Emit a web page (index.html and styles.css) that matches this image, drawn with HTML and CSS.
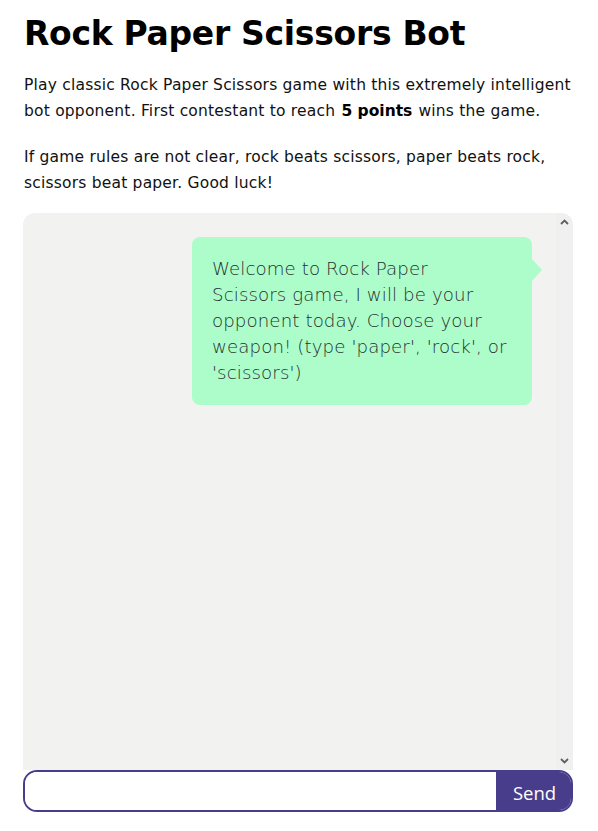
FILE: index.html
```html
<!DOCTYPE html>
<html>
<head>
<meta charset="utf-8">
<link rel="stylesheet" href="styles.css">
</head>
<body>
<main class="page">
  <h1 class="title">Rock Paper Scissors Bot</h1>
  <p class="intro">Play classic Rock Paper Scissors game with this extremely intelligent bot opponent. First contestant to reach <b>5 points</b> wins the game.</p>
  <p class="intro last">If game rules are not clear, rock beats scissors, paper beats rock, scissors beat paper. Good luck!</p>
  <section class="chat">
    <div class="window">
      <div class="messages">
        <div class="bubble bot">Welcome to Rock Paper<br>Scissors game, I will be your opponent today. Choose your weapon! (type 'paper', 'rock', or 'scissors')</div>
      </div>
      <div class="scrollbar">
        <svg class="arrow" width="9" height="6" viewBox="0 0 9 6"><path d="M1 5 L4.5 1.5 L8 5" fill="none" stroke="#5f5f5f" stroke-width="1.8"/></svg>
        <svg class="arrow" width="9" height="6" viewBox="0 0 9 6"><path d="M1 1 L4.5 4.5 L8 1" fill="none" stroke="#5f5f5f" stroke-width="1.8"/></svg>
      </div>
    </div>
    <form class="composer">
      <input class="field" type="text">
      <button class="send" type="button">Send</button>
    </form>
  </section>
</main>
</body>
</html>
```
FILE: styles.css
```css
html, body { margin: 0; padding: 0; background: #fff; }
.page {
  padding: 14px 25px 0 23px;
  font-family: "DejaVu Sans", sans-serif;
  color: #111;
}
.title {
  margin: 0 0 18px 1px;
  font-size: 33px;
  font-weight: 700;
  line-height: 40px;
  letter-spacing: -0.3px;
  color: #000;
}
.intro {
  margin: 0 0 20px 1px;
  font-size: 15.5px;
  letter-spacing: 0.2px;
  line-height: 26px;
}
.intro.last { margin-bottom: 17px; }
.intro b { font-weight: 700; color: #000; letter-spacing: 0; margin: 0 1px; }
.window {
  display: flex;
  height: 557px;
  background: #f2f2f1;
  border-radius: 12px 12px 0 0;
  overflow: hidden;
}
.messages {
  flex: 1;
  padding: 24px 24px 24px 0;
}
.scrollbar {
  width: 17px;
  background: #f0f0f0;
  display: flex;
  flex-direction: column;
  justify-content: space-between;
  align-items: center;
  padding: 6px 0 6px;
}
.bubble {
  position: relative;
  width: 340px;
  margin-left: auto;
  box-sizing: border-box;
  background: #acfdca;
  color: #26302f;
  border-radius: 8px;
  padding: 19px 20px 19px 20px;
  font-size: 18.2px;
  letter-spacing: 0.1px;
  line-height: 26px;
  font-weight: 300;
}
.bubble::after {
  content: "";
  position: absolute;
  right: -10px;
  top: 22px;
  border-left: 10px solid #acfdca;
  border-top: 11px solid transparent;
  border-bottom: 11px solid transparent;
}
.composer {
  display: flex;
  height: 42px;
  box-sizing: border-box;
  border: 2px solid #483d8b;
  border-radius: 14px;
  overflow: hidden;
  margin: 0;
}
.field {
  flex: 1;
  border: 0;
  outline: none;
  padding: 0 12px;
  font-size: 16px;
  background: #fff;
}
.send {
  width: 75px;
  border: 0;
  background: #483d8b;
  color: #fff;
  font-family: "Open Sans", sans-serif;
  font-size: 18.5px;
  padding: 2px 0 0 2px;
}
```
